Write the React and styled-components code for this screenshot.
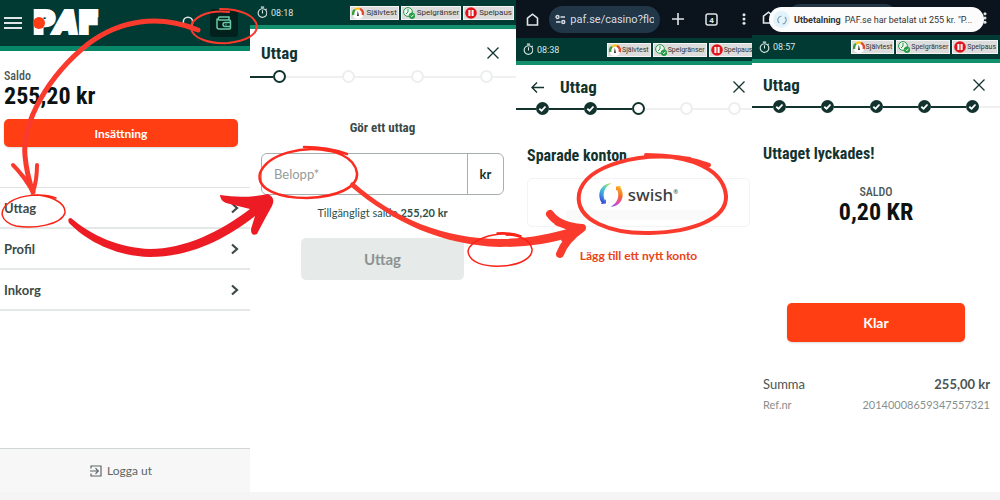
import styled, { createGlobalStyle } from "styled-components";
import { MdOutlineTimer } from "react-icons/md";

const GlobalStyle = createGlobalStyle`
  * {
    box-sizing: border-box;
  }
  body {
    margin: 0;
    background: #f5f5f5;
    font-family: Lato, "Open Sans", sans-serif;
    color: #3c4a47;
  }
  button, input {
    font-family: inherit;
    margin: 0;
  }
  h1, h2, p, ul, ol, dl, dd {
    margin: 0;
    padding: 0;
    list-style: none;
  }
`;

const condensed = `"Roboto Condensed", "Liberation Sans Narrow", Roboto, sans-serif`;

const Page = styled.main`
  position: relative;
  min-height: 100vh;
  display: flex;
  flex-direction: column;
  padding-bottom: 8px;
`;

const Panels = styled.div`
  flex: 1;
  display: grid;
  grid-template-columns: 250fr 266fr 236fr 248fr;
`;

const Panel = styled.section`
  min-width: 0;
  overflow: hidden;
  display: flex;
  flex-direction: column;
  background: white;
`;

const SiteHeader = styled.header`
  display: flex;
  align-items: center;
  gap: 7px;
  height: 51px;
  padding: 0 12px 0 3px;
  background: #003a33;
  border-bottom: 5px solid #078765;
`;

const IconButton = styled.button`
  display: flex;
  flex-shrink: 0;
  align-items: center;
  justify-content: center;
  width: ${(props) => props.$size || 20}px;
  height: ${(props) => props.$size || 20}px;
  padding: 0;
  border: 0;
  border-radius: 3px;
  background: ${(props) => (props.$dark ? "#02201c" : "transparent")};
  color: ${(props) => (props.$light ? "#dfe6e8" : "#12332e")};
  color: ${(props) => props.$dark && "#69c9a8"};
`;

const Logo = styled.a`
  position: relative;
  flex: 1;
  margin-left: 3px;
  font-family: "DejaVu Sans", sans-serif;
  font-weight: 700;
  font-size: 30px;
  line-height: 32px;
  white-space: nowrap;
  color: white;
  text-decoration: none;
  -webkit-text-stroke: 4px white;
`;

const LogoDot = styled.span`
  position: absolute;
  left: 0;
  top: 10px;
  width: 12px;
  height: 12px;
  border-radius: 50%;
  background: #ff3c14;
`;

const Balance = styled.div`
  padding: 17px 12px 10px 4px;
`;

const BalanceLabel = styled.p`
  font-family: ${condensed};
  font-weight: 500;
  font-size: 12px;
  line-height: 16px;
  color: #4b5755;
`;

const BalanceValue = styled.p`
  font-family: ${condensed};
  font-weight: 700;
  font-size: 24px;
  line-height: 25px;
  color: #0b1211;
`;

const PrimaryButton = styled.button`
  height: ${(props) => (props.$large ? 39 : 28)}px;
  margin: ${(props) => (props.$large ? "0 35px" : "0 12px 0 4px")};
  border: 0;
  border-radius: 5px;
  background: #ff3f13;
  color: white;
  font-weight: 700;
  font-size: ${(props) => (props.$large ? 14 : 12)}px;
  box-shadow: 0 1px 2px rgba(0, 0, 0, 0.15);
`;

const Menu = styled.ul`
  margin-top: 40px;
  border-top: 1px solid #e0e4e3;
`;

const MenuLink = styled.a`
  display: flex;
  align-items: center;
  justify-content: space-between;
  height: 41px;
  padding: 0 11px 0 4px;
  border-bottom: 2px solid #e4e8e7;
  color: #3c4a47;
  font-weight: 700;
  font-size: 13px;
  text-decoration: none;
`;

const LogoutButton = styled.button`
  display: flex;
  align-items: center;
  justify-content: center;
  gap: 5px;
  height: 44px;
  margin-top: auto;
  padding: 0 8px 0 0;
  border: 0;
  border-top: 1px solid #cfd6d5;
  background: #f7f7f7;
  color: #5c6664;
  font-size: 12px;
`;

const StatusBar = styled.div`
  display: flex;
  align-items: center;
  gap: 2px;
  height: ${(props) => props.$height}px;
  padding: 0 2px 0 6px;
  background: #003a33;
  border-bottom: 4px solid #12906e;
  color: #dbe6e4;
  font-family: Roboto, sans-serif;
  font-size: 9px;
`;

const Clock = styled.span`
  display: flex;
  align-items: center;
  gap: 2px;
  flex: 1 0 83px;
`;

const Chip = styled.button`
  display: flex;
  flex-shrink: 0;
  align-items: center;
  gap: ${(props) => (props.$small ? 1 : 2)}px;
  height: 14px;
  padding: 0 1px;
  border: 1px solid #f4f4f4;
  background: #dcdcdc;
  color: #333;
  font-size: ${(props) => (props.$small ? 7 : 8)}px;
`;

const TitleRow = styled.div`
  display: flex;
  align-items: center;
  height: ${(props) => props.$height}px;
  padding: 7px ${(props) => props.$right}px 0 11px;
`;

const Title = styled.h1`
  flex: 1;
  margin-left: ${(props) => (props.$indent ? 13 : 0)}px;
  font-family: ${condensed};
  font-weight: 700;
  font-size: 17px;
  line-height: 20px;
  color: #12332e;
`;

const Steps = styled.ol`
  display: flex;
  align-items: center;
  height: 13px;
`;

const StepLine = styled.li`
  flex: ${(props) => (props.$width ? `0 0 ${props.$width}px` : 1)};
  height: 2px;
  background: ${(props) => (props.$done ? "#12332e" : "#eff1f1")};
`;

const Step = styled.li`
  display: flex;
  align-items: center;
  justify-content: center;
  width: 13px;
  height: 13px;
  border: 2px solid ${(props) => (props.$state === "todo" ? "#eceeee" : "#12332e")};
  border-radius: 50%;
  background: ${(props) => (props.$state === "done" ? "#12332e" : "white")};
`;

const SectionTitle = styled.h2`
  padding: 31px 11px 0;
  font-family: ${condensed};
  font-weight: 700;
  font-size: 16px;
  line-height: 20px;
  color: #12332e;
`;

const Form = styled.form`
  display: flex;
  flex-direction: column;
  align-items: center;
  padding: 35px 12px 0 11px;
`;

const FormTitle = styled.h2`
  font-family: ${condensed};
  font-weight: 700;
  font-size: 13px;
  line-height: 20px;
  color: #3c4a47;
`;

const AmountField = styled.label`
  display: flex;
  width: 100%;
  height: 42px;
  margin-top: 15px;
  border: 1px solid #a9afae;
  border-radius: 6px;
`;

const AmountInput = styled.input`
  flex: 1;
  min-width: 0;
  padding: 0 12px;
  border: 0;
  background: transparent;
  font-size: 13px;
  &::placeholder {
    color: #969c9b;
  }
`;

const Unit = styled.span`
  display: flex;
  align-items: center;
  justify-content: center;
  width: 36px;
  border-left: 1px solid #a9afae;
  color: #12332e;
  font-weight: 700;
  font-size: 13px;
`;

const Available = styled.p`
  margin-top: 10px;
  font-size: 11px;
  line-height: 16px;
  color: #2d4f4a;
`;

const SubmitButton = styled.button`
  width: 67%;
  height: 42px;
  margin-top: 17px;
  border: 0;
  border-radius: 5px;
  background: #e6eae9;
  color: #8b9391;
  font-weight: 700;
  font-size: 15px;
`;

const BrowserBar = styled.div`
  position: relative;
  display: flex;
  align-items: center;
  justify-content: space-between;
  height: ${(props) => props.$height}px;
  padding: 0 ${(props) => props.$right}px 0 6px;
  background: #0b131c;
`;

const Address = styled.label`
  display: flex;
  align-items: center;
  gap: 4px;
  width: 111px;
  height: 27px;
  padding: 0 6px;
  border-radius: 14px;
  background: #213647;
  color: #d7dce2;
`;

const AddressInput = styled.input`
  flex: 1;
  min-width: 0;
  padding: 0;
  border: 0;
  background: transparent;
  color: #d7dce2;
  font-family: Roboto, sans-serif;
  font-size: 11px;
`;

const Notification = styled.div`
  position: absolute;
  left: 17px;
  right: 16px;
  top: 7px;
  height: 25px;
  display: flex;
  align-items: center;
  gap: 4px;
  padding: 0 4px;
  border-radius: 13px;
  background: #fcfcfc;
  color: #333;
  font-family: Roboto, sans-serif;
  font-size: 9px;
  white-space: nowrap;
`;

const NotificationIcon = styled.span`
  display: flex;
  flex-shrink: 0;
  align-items: center;
  justify-content: center;
  width: 17px;
  height: 17px;
  border-radius: 50%;
  background: #e2f4fb;
`;

const AccountCard = styled.button`
  display: flex;
  flex-direction: column;
  align-items: center;
  gap: 2px;
  height: 49px;
  margin: 12px 2px 0 11px;
  padding: 3px 38px 0;
  border: 1px solid #f3f3f3;
  border-radius: 5px;
  background: white;
`;

const SwishBrand = styled.span`
  display: flex;
  align-items: center;
  gap: 5px;
  color: #3d3d3d;
  font-family: "Noto Sans", sans-serif;
  font-weight: 500;
  font-size: 17px;
  line-height: 26px;
`;

const Registered = styled.sup`
  font-size: 6px;
  line-height: 6px;
`;

const CardNote = styled.span`
  width: 100%;
  height: 10px;
  background: #fafafa;
`;

const AddLink = styled.a`
  margin: 21px 0 0 5px;
  align-self: center;
  padding-left: 4px;
  color: #ea4317;
  font-weight: 700;
  font-size: 12px;
  line-height: 16px;
  text-decoration: none;
`;

const Result = styled.div`
  padding: 20px 0 78px;
  text-align: center;
`;

const Summary = styled.dl`
  display: flex;
  flex-direction: column;
  padding: 31px 10px 0 11px;
`;

const SummaryRow = styled.div`
  display: flex;
  align-items: center;
  justify-content: space-between;
  height: 21px;
  font-size: ${(props) => (props.$minor ? 11 : 13)}px;
  color: ${(props) => (props.$minor ? "#8a8f8e" : "#4b5553")};

  dd {
    font-weight: ${(props) => (props.$minor ? 400 : 700)};
  }
`;

const Markings = styled.svg`
  position: absolute;
  left: 0;
  top: 0;
  width: 100%;
  pointer-events: none;
`;

function CloseIcon() {
  return (
    <svg width="12" height="12" viewBox="0 0 12 12" stroke="currentColor" strokeWidth="1.3">
      <path d="M0.5 0.5 11.5 11.5M11.5 0.5 0.5 11.5" />
    </svg>
  );
}

function CheckIcon() {
  return (
    <svg width="9" height="9" viewBox="0 0 9 9" fill="none" stroke="white" strokeWidth="1.8">
      <path d="M1.3 4.700 3.600 6.700 7.500 2.500" />
    </svg>
  );
}

function GaugeIcon() {
  return (
    <svg width="12" height="12" viewBox="0 0 12 12">
      <circle cx="6" cy="6" r="6" fill="#fff" />
      <g fill="none" strokeWidth="2.4">
        <path d="M1.5 8A4.7 4.7 0 0 1 3 2.6" stroke="#3b9b3f" />
        <path d="M3 2.6A4.7 4.7 0 0 1 8 1.8" stroke="#f2c318" />
        <path d="M8 1.8A4.7 4.7 0 0 1 10.5 8" stroke="#e5482c" />
      </g>
      <path d="M5 9 5.8 3.5 7 9z" fill="#333" />
    </svg>
  );
}

function LimitsIcon() {
  return (
    <svg width="12" height="12" viewBox="0 0 12 12" fill="none" stroke="#279c48">
      <circle cx="5" cy="5" r="4.4" fill="#eef7f0" />
      <path d="M5 2v3l-2 2" />
      <circle cx="9" cy="8.7" r="2.8" fill="#279c48" />
      <path d="m7.8 8.7 1 1 1.6-2" stroke="#fff" />
    </svg>
  );
}

function PauseIcon() {
  return (
    <svg width="12" height="12" viewBox="0 0 12 12">
      <circle cx="6" cy="6" r="5.8" fill="#e3131b" />
      <path d="M3.4 3h2v6h-2zM6.6 3h2v6h-2z" fill="#fff" />
    </svg>
  );
}

function SwishIcon() {
  return (
    <svg width="24" height="24" viewBox="0 0 24 24">
      <defs>
        <linearGradient id="swishLeft" x1="0.8" y1="0" x2="0.2" y2="1">
          <stop offset="0" stopColor="#b5dc5a" />
          <stop offset="0.35" stopColor="#4fcfc4" />
          <stop offset="0.7" stopColor="#3a8fe8" />
          <stop offset="1" stopColor="#3b2fd0" />
        </linearGradient>
        <linearGradient id="swishRight" x1="0.7" y1="0" x2="0.3" y2="1">
          <stop offset="0" stopColor="#fbb61a" />
          <stop offset="0.4" stopColor="#f4682f" />
          <stop offset="0.75" stopColor="#e04ab4" />
          <stop offset="1" stopColor="#8a55e0" />
        </linearGradient>
      </defs>
      <path d="M12.5 0.3C5.500 0.200 0.300 5.600 0.300 12c0 3 1 5.800 2.500 7.800L2 21l5 -0.500L7 16.200 5.800 17.200C3 11 5.500 3.500 12.500 0.300z" fill="url(#swishLeft)" />
      <path d="M11.500 23.700C18.500 23.800 23.700 18.400 23.700 12c0-3-1-5.800-2.500-7.800L22 3l-5 0.500L17 7.800 18.200 6.800C21 13 18.500 20.500 11.500 23.700z" fill="url(#swishRight)" />
    </svg>
  );
}

function SenderIcon() {
  return (
    <svg width="10" height="10" viewBox="0 0 10 10" fill="none" stroke="#8aa0a8" strokeWidth="1.200">
      <path d="M4.500 1A4 4 0 0 0 2.200 8M5.500 9A4 4 0 0 0 7.800 2" />
    </svg>
  );
}

function Status({ time, height, small }) {
  return (
    <StatusBar $height={height}>
      <Clock>
        <MdOutlineTimer size={13} />
        {time}
      </Clock>
      <Chip $small={small}>
        <GaugeIcon />
        Självtest
      </Chip>
      <Chip $small={small}>
        <LimitsIcon />
        Spelgränser
      </Chip>
      <Chip $small={small}>
        <PauseIcon />
        Spelpaus
      </Chip>
    </StatusBar>
  );
}

function Browser({ height, right, address, tabs, children }) {
  return (
    <BrowserBar $height={height} $right={right}>
      <IconButton aria-label="Hem" $light>
        <svg width="13" height="13" viewBox="0 0 13 13" fill="none" stroke="currentColor" strokeWidth="1.6">
          <path d="M1.500 12V5.200L6.500 1.200l5 4V12z" />
        </svg>
      </IconButton>
      <Address>
        <svg width="11" height="11" viewBox="0 0 11 11" fill="none" stroke="currentColor" strokeWidth="1.400">
          <circle cx="2.500" cy="3" r="1.500" />
          <path d="M5.500 3H10M1 8h4.500" />
          <circle cx="8.300" cy="8" r="1.500" />
        </svg>
        <AddressInput aria-label="Adress" readOnly value={address} />
      </Address>
      <IconButton aria-label="Ny flik" $light>
        <svg width="12" height="12" viewBox="0 0 12 12" stroke="currentColor" strokeWidth="1.600">
          <path d="M6 0v12M0 6h12" />
        </svg>
      </IconButton>
      <IconButton aria-label="Flikar" $size={34} $light>
        <svg width="13" height="13" viewBox="0 0 13 13">
          <rect x="1" y="1" width="11" height="11" rx="2" fill="none" stroke="currentColor" strokeWidth="1.500" />
          {tabs && (
            <text x="6.500" y="9.500" textAnchor="middle" fontFamily="Roboto" fontWeight="700" fontSize="8" fill="currentColor">
              {tabs}
            </text>
          )}
        </svg>
      </IconButton>
      <IconButton aria-label="Meny" $size={16} $light>
        <svg width="4" height="12" viewBox="0 0 4 12" fill="currentColor">
          <circle cx="2" cy="1.700" r="1.500" />
          <circle cx="2" cy="6" r="1.500" />
          <circle cx="2" cy="10.300" r="1.500" />
        </svg>
      </IconButton>
      {children}
    </BrowserBar>
  );
}

function Stepper({ total, done, lead, tail }) {
  const items = [<StepLine key="lead" $width={lead} $done aria-hidden />];
  for (let i = 0; i < total; i++) {
    const state = i < done ? "done" : i === done ? "current" : "todo";
    if (i > 0) {
      items.push(<StepLine key={`line${i}`} $done={i <= done} aria-hidden />);
    }
    items.push(
      <Step key={i} $state={state}>
        {state === "done" && <CheckIcon />}
      </Step>
    );
  }
  items.push(<StepLine key="tail" $width={tail} aria-hidden />);
  return <Steps>{items}</Steps>;
}

function AccountPanel() {
  return (
    <Panel>
      <SiteHeader>
        <IconButton aria-label="Meny" $light>
          <svg width="18" height="12" viewBox="0 0 18 12" stroke="currentColor" strokeWidth="1.800">
            <path d="M0 1h18M0 6h18M0 11h18" />
          </svg>
        </IconButton>
        <Logo href="#" aria-label="PAF">
          P<i>A</i>F
          <LogoDot />
        </Logo>
        <IconButton aria-label="Sök" $size={28} $light>
          <svg width="14" height="14" viewBox="0 0 14 14" fill="none" stroke="currentColor" strokeWidth="1.600">
            <circle cx="6" cy="6" r="4.700" />
            <path d="m9.500 9.500 3 3" />
          </svg>
        </IconButton>
        <IconButton aria-label="Plånbok" $size={28} $dark>
          <svg width="16" height="14" viewBox="0 0 16 14" fill="none" stroke="currentColor" strokeWidth="1.500">
            <path d="M13 4V1H3a2 2 0 0 0 0 3h10.500q1 0 1 1v7q0 1-1 1H3q-2 0-2-2V2.500" />
            <path d="M14.500 6.500H9a2 2 0 0 0 0 4h5.500M9.500 8.500h1" />
          </svg>
        </IconButton>
      </SiteHeader>
      <Balance>
        <BalanceLabel>Saldo</BalanceLabel>
        <BalanceValue>255,20 kr</BalanceValue>
      </Balance>
      <PrimaryButton>Insättning</PrimaryButton>
      <Menu>
        {["Uttag", "Profil", "Inkorg"].map((item) => (
          <li key={item}>
            <MenuLink href="#">
              {item}
              <svg width="9" height="12" viewBox="0 0 9 12" fill="none" stroke="currentColor" strokeWidth="2.200">
                <path d="m2 1.500 5 4.500-5 4.500" />
              </svg>
            </MenuLink>
          </li>
        ))}
      </Menu>
      <LogoutButton>
        <svg width="12" height="12" viewBox="0 0 12 12" fill="none" stroke="currentColor" strokeWidth="1.200">
          <path d="M1 3.500V1h10v10H1V8.500M0 6h8M5.500 3.200 8.300 6 5.500 8.800" />
        </svg>
        Logga ut
      </LogoutButton>
    </Panel>
  );
}

function AmountPanel() {
  return (
    <Panel>
      <Status time="08:18" height={29} />
      <TitleRow $height={41} $right={13}>
        <Title>Uttag</Title>
        <IconButton aria-label="Stäng">
          <CloseIcon />
        </IconButton>
      </TitleRow>
      <Stepper total={4} done={0} lead={23} tail={23} />
      <Form>
        <FormTitle>Gör ett uttag</FormTitle>
        <AmountField>
          <AmountInput aria-label="Belopp" placeholder="Belopp*" />
          <Unit>kr</Unit>
        </AmountField>
        <Available>
          Tillgängligt saldo <b>255,20 kr</b>
        </Available>
        <SubmitButton type="button">Uttag</SubmitButton>
      </Form>
    </Panel>
  );
}

function AccountsPanel() {
  return (
    <Panel>
      <Browser height={38} right={0} address="paf.se/casino?flow" tabs="4" />
      <Status time="08:38" height={27} small />
      <TitleRow $height={37} $right={3}>
        <IconButton aria-label="Tillbaka">
          <svg width="13" height="11" viewBox="0 0 13 11" fill="none" stroke="currentColor" strokeWidth="1.400">
            <path d="M13 5.500H1M6 0.500 1 5.500l5 5" />
          </svg>
        </IconButton>
        <Title $indent>Uttag</Title>
        <IconButton aria-label="Stäng">
          <CloseIcon />
        </IconButton>
      </TitleRow>
      <Stepper total={5} done={2} lead={20} tail={11} />
      <SectionTitle>Sparade konton</SectionTitle>
      <AccountCard>
        <SwishBrand>
          <SwishIcon />
          <span>
            swish<Registered>®</Registered>
          </span>
        </SwishBrand>
        <CardNote />
      </AccountCard>
      <AddLink href="#">Lägg till ett nytt konto</AddLink>
    </Panel>
  );
}

function ReceiptPanel() {
  return (
    <Panel>
      <Browser height={35} right={7} address="">
        <Notification role="status">
          <NotificationIcon>
            <SenderIcon />
          </NotificationIcon>
          <b>Utbetalning</b>
          <span>PAF.se har betalat ut 255 kr. "P...</span>
        </Notification>
      </Browser>
      <Status time="08:57" height={28} small />
      <TitleRow $height={37} $right={11}>
        <Title>Uttag</Title>
        <IconButton aria-label="Stäng">
          <CloseIcon />
        </IconButton>
      </TitleRow>
      <Stepper total={5} done={5} lead={21} tail={21} />
      <SectionTitle>Uttaget lyckades!</SectionTitle>
      <Result>
        <BalanceLabel>SALDO</BalanceLabel>
        <BalanceValue>0,20 KR</BalanceValue>
      </Result>
      <PrimaryButton $large>Klar</PrimaryButton>
      <Summary>
        <SummaryRow>
          <dt>Summa</dt>
          <dd>255,00 kr</dd>
        </SummaryRow>
        <SummaryRow $minor>
          <dt>Ref.nr</dt>
          <dd>20140008659347557321</dd>
        </SummaryRow>
      </Summary>
    </Panel>
  );
}

export default function App() {
  return (
    <Page>
      <GlobalStyle />
      <Panels>
        <AccountPanel />
        <AmountPanel />
        <AccountsPanel />
        <ReceiptPanel />
      </Panels>
      {/* hand drawn arrows and rings that lead from step to step */}
      <Markings viewBox="0 0 1000 500" fill="none" stroke="#fb3a2e" strokeLinecap="round" strokeLinejoin="round" aria-hidden>
        <path d="M198 30C158 14 120 20 88 44C48 76 22 122 25 156Q27 176 33 192" strokeWidth="5" />
        <path d="M13 165Q24 176 33 192Q37 180 37 165M16 168 33 188" strokeWidth="4" />
        <path d="M229 12C206 9 191 19 191 28C192 39 211 44 228 43C246 41 257 35 257 26C255 15 240 9 220 9" strokeWidth="2" />
        <path d="M56 198C46 194 24 193 10 202C-3 211 1 222 16 226C34 229 61 225 65 213C66 202 48 194 31 195" stroke="#f92417" strokeWidth="1.500" />
        <path d="M71 218C92 236 120 248 150 249C184 249 220 232 250 209L226 203Q220 200 220 195Q244 199 268 194Q276 198 272 206Q262 224 257 234Q251 237 251 229L255 216C226 239 190 257 150 257C116 256 88 242 69 223Q67 218 71 218z" fill="#ed1c24" stroke="none" />
        <path d="M304 147C323 147 336 150 347 154M330 151C302 145 268 154 260 173C256 190 280 198 307 198C336 197 358 188 357 173C355 157 334 149 313 149" stroke="#fb2c1f" strokeWidth="2.500" />
        <path d="M353 182C394 219 446 239 500 239C526 239 552 234 570 228L573 236C550 244 526 247 500 247C442 245 394 223 350 186Q350 182 353 182z" fill="#fb3a2e" stroke="none" />
        <path d="M550 214Q558 226 582 228Q565 240 560 254M558 222 577 229 565 239" strokeWidth="8" />
        <path d="M497 233Q512 232 521 236M514 235C492 231 470 241 468 251C469 263 485 267 502 266C520 265 533 258 532 249C530 239 518 235 506 235" stroke="#f92417" strokeWidth="1.500" />
        <path d="M646 155Q682 155 709 165M690 159C640 151 585 165 579 194C575 221 612 234 650 233C692 232 727 219 726 196C724 173 700 161 672 157" strokeWidth="4" />
      </Markings>
    </Page>
  );
}
